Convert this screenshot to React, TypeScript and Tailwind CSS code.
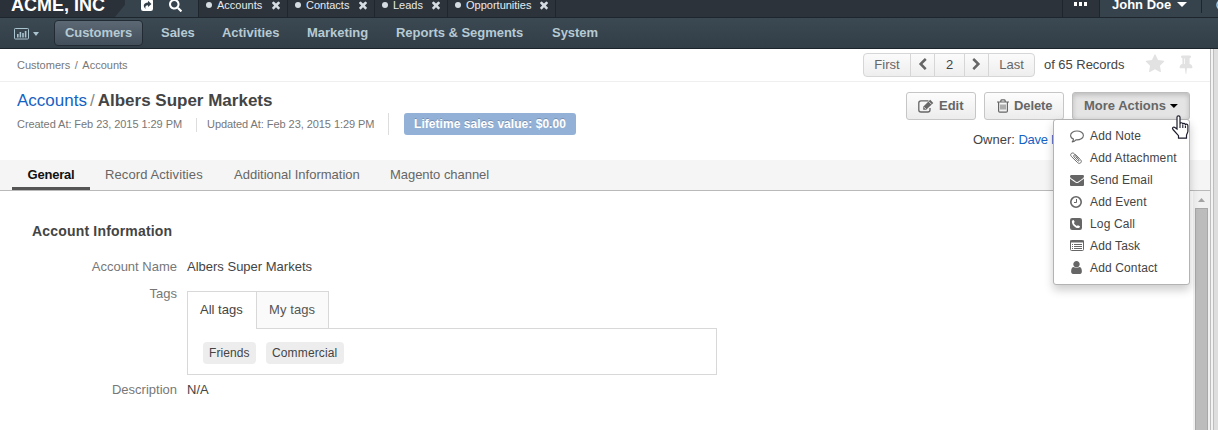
import type { ReactNode } from "react";
import { FaSearch } from "react-icons/fa";

function Glyph({ d, className }: { d: string; className: string }) {
  return (
    <svg viewBox="0 0 1792 1792" fill="currentColor" className={`shrink-0 ${className}`}>
      <path d={d} />
    </svg>
  );
}

const TIMES =
  "M1490 1322q0 40-28 68l-136 136q-28 28-68 28t-68-28l-294-294-294 294q-28 28-68 28t-68-28l-136-136q-28-28-28-68t28-68l294-294-294-294q-28-28-28-68t28-68l136-136q28-28 68-28t68 28l294 294 294-294q28-28 68-28t68 28l136 136q28 28 28 68t-28 68l-294 294 294 294q28 28 28 68z";
const CHEVRON_LEFT =
  "M1427 301l-531 531 531 531q19 19 19 45t-19 45l-166 166q-19 19-45 19t-45-19l-742-742q-19-19-19-45t19-45l742-742q19-19 45-19t45 19l166 166q19 19 19 45t-19 45z";
const CHEVRON_RIGHT =
  "M1363 877l-742 742q-19 19-45 19t-45-19l-166-166q-19-19-19-45t19-45l531-531-531-531q-19-19-19-45t19-45l166-166q19-19 45-19t45 19l742 742q19 19 19 45t-19 45z";
const STAR =
  "M1728 647q0 22-26 48l-363 354 86 500q1 7 1 20 0 21-10.500 35.500t-30.500 14.500q-19 0-40-12l-449-236-449 236q-22 12-40 12-21 0-31.500-14.500t-10.500-35.500q0-6 2-20l86-500-364-354q-25-27-25-48 0-37 56-46l502-73 225-455q19-41 49-41t49 41l225 455 502 73q56 9 56 46z";
const PIN =
  "M800 864v-448q0-14-9-23t-23-9-23 9-9 23v448q0 14 9 23t23 9 23-9 9-23zm672 352q0 26-19 45t-45 19h-429l-51 483q-2 12-10.500 20.500t-20.500 8.500h-1q-27 0-32-27l-76-485h-404q-26 0-45-19t-19-45q0-123 78.500-221.500t177.500-98.500v-512q-52 0-90-38t-38-90 38-90 90-38h640q52 0 90 38t38 90-38 90-90 38v512q99 0 177.500 98.500t78.500 221.500z";
const ENVELOPE =
  "M1792 710v794q0 66-47 113t-113 47h-1472q-66 0-113-47t-47-113v-794q44 49 101 87 362 246 497 345 57 42 92.500 65.500t94.500 48 110 24.500h2q51 0 110-24.500t94.500-48 92.500-65.500q170-123 498-345 57-39 100-87zm0-294q0 79-49 151t-122 123q-376 261-468 325-10 7-42.500 31t-54 38.500-52 32.500-57.500 27-50 9h-2q-23 0-50-9t-57.500-27-52-32.500-54-38.500-42.500-31q-91-64-262-182.500t-205-142.500q-62-42-117-115.500t-55-136.500q0-78 41.500-130t118.500-52h1472q65 0 112.500 47t47.500 113z";
const USER =
  "M1536 1399q0 109-62.500 187t-150.500 78h-854q-88 0-150.500-78t-62.500-187q0-85 8.500-160.500t31.500-152 58.500-131 94-89 134.500-34.500q131 128 313 128t313-128q76 0 134.500 34.500t94 89 58.500 131 31.500 152 8.500 160.500zm-256-887q0 159-112.500 271.500t-271.500 112.500-271.500-112.500-112.500-271.500 112.500-271.500 271.500-112.500 271.500 112.500 112.500 271.500z";

function ShareIcon() {
  return (
    <svg viewBox="0 0 12 12" className="size-[12px]">
      <rect width="12" height="12" rx="2.2" fill="#fff" />
      <path d="M7 1.800 10.500 5 7 8.100V6.300C4.800 6.300 4 7.200 4.500 10 1.600 7.300 2.500 3.800 7 3.600Z" fill="#33404a" />
    </svg>
  );
}

function ChartIcon() {
  return (
    <svg viewBox="0 0 15 12" className="h-[12px] w-[15px]">
      <rect x=".5" y=".5" width="14" height="10.500" rx=".8" fill="none" stroke="#a9c3cf" />
      <path d="M3 6h1.600v3.500H3zM5.600 4h1.600v5.500H5.600zM8.200 5h1.600v4.500H8.200zM10.800 3h1.600v6.500h-1.600z" fill="#a9c3cf" />
    </svg>
  );
}

function EditIcon() {
  return (
    <svg viewBox="0 0 16 14" className="mr-[5px] h-[14px] w-[16px] shrink-0">
      <path d="M10.500 1.800H3Q.8 1.800.8 4v7Q.8 13 3 13h6.800Q12 13 12 11V9" fill="none" stroke="currentColor" strokeWidth="1.300" />
      <path d="M12.200.8 15.300 3.900 8.200 10.800H5.200V7.800Z" fill="currentColor" />
      <path d="M10.800 2.600 13.600 5.400M6 8.200 7.800 10" stroke="#f6f6f6" strokeWidth=".8" />
    </svg>
  );
}

function TrashIcon() {
  return (
    <svg viewBox="0 0 12 14" className="mr-[5px] h-[14px] w-[12px] shrink-0" fill="none" stroke="currentColor">
      <path d="M0 3H12M3.800 3V1.800Q4 .9 4.800.9H7.200Q8 .9 8.200 1.800V3M1.600 3V12Q1.600 13.200 2.800 13.200H9.200Q10.400 13.200 10.400 12V3" strokeWidth="1.200" />
      <path d="M4 5.500v5M6 5.500v5M8 5.500v5" />
    </svg>
  );
}

function CommentIcon() {
  return (
    <svg viewBox="0 0 14 13" className="h-[13px] w-[14px]" fill="none" stroke="currentColor">
      <path d="M7 1C3.500 1 .6 2.900.6 5.400.6 7 1.700 8.300 3.500 9.100 3.400 10.200 2.900 11 2.200 11.900 3.900 11.500 5.100 10.800 5.900 9.800 10.200 10.200 13.400 8 13.400 5.400 13.400 2.900 10.500 1 7 1Z" strokeWidth="1.100" strokeLinejoin="round" />
    </svg>
  );
}

function PaperclipIcon() {
  return (
    <svg viewBox="0 0 12 12" className="size-[12px]" fill="none" stroke="currentColor" strokeLinecap="round">
      <path d="M8.600 6 4.300 1.700C2.200-.3-.6 2.200 1.300 4.400L7.700 10.700C9.800 12.600 12.600 10 10.700 7.900L5.900 3.200C4.500 2 2.800 3.600 4.100 5L7.900 8.800C8.800 9.500 9.600 8.600 8.900 7.800L5.700 4.700" strokeWidth=".95" />
    </svg>
  );
}

function ClockIcon() {
  return (
    <svg viewBox="0 0 12 12" className="size-[12px]" fill="none" stroke="currentColor">
      <circle cx="6" cy="6" r="5.200" strokeWidth="1.600" />
      <path d="M6.500 3V6.500H4" strokeWidth="1" />
    </svg>
  );
}

function PhoneSquareIcon() {
  return (
    <svg viewBox="0 0 12 12" className="size-[12px]">
      <rect width="12" height="12" rx="2.200" fill="currentColor" />
      <path d="M3.700 2.100 4.700 3.900 3.900 5C4.500 6.300 5.500 7.300 6.800 7.900L7.900 7.200 10 8.300C9.900 9.600 9 10.100 7.900 10.100 5 9.700 2.200 6.800 1.900 3.900 1.900 2.900 2.500 2.200 3.700 2.100Z" fill="#fff" />
    </svg>
  );
}

function ListIcon() {
  return (
    <svg viewBox="0 0 14 12" className="h-[12px] w-[14px]" fill="none" stroke="currentColor">
      <rect x=".5" y=".5" width="13" height="10" rx="1" />
      <path d="M0 1.500H14" strokeWidth="2" />
      <path d="M2 4.500h1M4 4.500h8M2 6.500h1M4 6.500h8M2 8.500h1M4 8.500h8" />
    </svg>
  );
}

function HandCursor() {
  return (
    <svg viewBox="0 0 18 24" className="absolute top-[115px] left-[1171px] z-30 h-[24px] w-[18px]">
      <path
        d="M6 14V2.300C6 .3 9 .3 9 2.300V9c0-1.700 2.800-1.700 2.800.3 0-1.500 2.600-1.300 2.600.7 0-1.500 2.500-1.200 2.500.8v5.400c0 1.500-1.400 3-1.400 4.300v2.700H7.500v-2.500L2 14.500C.6 12.800 2.600 11.300 4 12.500Z"
        fill="#fff"
        stroke="#1b1b2b"
        strokeWidth="1.200"
      />
      <path d="M9 9v4M11.800 9.500V13M14.400 10.500V13" stroke="#1b1b2b" strokeWidth="1.100" />
    </svg>
  );
}

function PinnedTab({ label, className }: { label: string; className: string }) {
  return (
    <div className={`flex h-[17px] shrink-0 border-r border-[#1f262d] pl-[7px] ${className}`}>
      <span className="mt-[2px] size-[6px] rounded-full bg-[#d5dde2]" />
      <span className="-mt-px ml-[5px] flex-1 text-[11px] leading-[13px] text-[#e6ebee]">{label}</span>
      <Glyph d={TIMES} className="-mt-px mr-[5px] size-[12px] text-[#d5dde2]" />
    </div>
  );
}

const pinned = [
  { label: "Accounts", className: "w-[89px]" },
  { label: "Contacts", className: "w-[87px]" },
  { label: "Leads", className: "w-[73px]" },
  { label: "Opportunities", className: "w-[108px]" },
];

function TopBar() {
  return (
    <header className="flex h-[18px] shrink-0 overflow-hidden border-b border-[#1e262d] bg-[#2d333b]">
      <div className="flex w-[199px] shrink-0 border-r border-[#1e262d] bg-[#36434d]">
        <div className="h-[17px] w-[125px] shrink-0 bg-[#2b3139] pl-[11px] [clip-path:polygon(0_0,100%_0,100%_28%,92%_100%,0_100%)]">
          <span className="-mt-[6px] block text-[18px] leading-[22px] font-bold whitespace-nowrap text-white">ACME, INC</span>
        </div>
        <div className="-mt-px ml-[16px]">
          <ShareIcon />
        </div>
        <FaSearch className="-mt-[1px] ml-[16px] size-[13px] text-white" />
      </div>
      {pinned.map((p) => (
        <PinnedTab key={p.label} {...p} />
      ))}
      <div className="flex-1" />
      <div className="flex w-[38px] shrink-0 gap-[2px] border-x border-[#1e262d] pt-[2px] pl-[11px]">
        <i className="h-[4px] w-[3px] bg-white" />
        <i className="h-[4px] w-[3px] bg-white" />
        <i className="h-[4px] w-[3px] bg-white" />
      </div>
      <div className="flex w-[118px] shrink-0 bg-[#36434d] pl-[12px]">
        <span className="-mt-[3px] w-[59px] shrink-0 text-[13px] leading-[15px] font-bold whitespace-nowrap text-white">John Doe</span>
        <i className="mt-[2px] ml-[6px] h-[5px] w-[10px] shrink-0 bg-white [clip-path:polygon(0_0,100%_0,50%_100%)]" />
        <div className="ml-[14px] h-[13px] w-px shrink-0 bg-[#1e262d]" />
        <svg viewBox="0 0 12 12" className="-mt-[1px] ml-[14px] size-[12px] shrink-0">
          <circle cx="6" cy="6" r="5" fill="none" stroke="#9cc9e8" strokeWidth="1.600" />
        </svg>
      </div>
    </header>
  );
}

const menus = [
  { label: "Sales", className: "w-[61px]" },
  { label: "Activities", className: "w-[85px]" },
  { label: "Marketing", className: "w-[89px]" },
  { label: "Reports & Segments", className: "w-[156px]" },
  { label: "System", className: "w-[60px]" },
];

function MainMenu() {
  return (
    <nav className="flex h-[31px] shrink-0 border-b border-[#1b242b] bg-linear-to-b from-[#3b4952] to-[#323e47] text-[13px] font-bold text-[#b6cad4]">
      <div className="flex w-[54px] pt-[10px] pl-[14px]">
        <ChartIcon />
        <i className="mt-[4px] ml-[4px] h-[4px] w-[6px] bg-[#a9c3cf] [clip-path:polygon(0_0,100%_0,50%_100%)]" />
      </div>
      <div className="mt-[2px] mr-[18px] h-[26px] w-[89px] rounded-[4px] border border-[#222b33] bg-linear-to-b from-[#5c6873] to-[#424f5a] pl-[10px] text-[13px] leading-[24px] tracking-[-0.08px]">
        Customers
      </div>
      {menus.map((m) => (
        <div key={m.label} className={`shrink-0 leading-[30px] tracking-[-0.03px] whitespace-nowrap ${m.className}`}>
          {m.label}
        </div>
      ))}
    </nav>
  );
}

function Pager() {
  return (
    <div className="flex h-[24px] w-[172px] overflow-hidden rounded-[4px] border border-[#d6d6d6] bg-linear-to-b from-[#fbfbfb] to-[#eeeeee] text-[13px] leading-[22px] text-[#666]">
      <div className="w-[47px] border-r border-[#d6d6d6] text-center">First</div>
      <div className="flex w-[24px] items-center justify-center border-r border-[#d6d6d6]">
        <Glyph d={CHEVRON_LEFT} className="-mt-[2px] size-[13px]" />
      </div>
      <div className="w-[30px] border-r border-[#d6d6d6] text-center text-[#444]">2</div>
      <div className="flex w-[24px] items-center justify-center border-r border-[#d6d6d6]">
        <Glyph d={CHEVRON_RIGHT} className="-mt-[2px] size-[13px]" />
      </div>
      <div className="flex-1 text-center">Last</div>
    </div>
  );
}

function RecordHeader() {
  return (
    <>
      <div className="flex h-[33px] shrink-0 border-b border-[#efefef] pl-[17px]">
        <div className="w-[846px] text-[11px] leading-[33px] text-[#777]">
          Customers<span className="mx-[1.500px]"> / </span>Accounts
        </div>
        <div className="pt-[4px]">
          <Pager />
        </div>
        <div className="ml-[9px] w-[101px] text-[13px] leading-[32px] tracking-[-0.04px] whitespace-nowrap text-[#444]">of 65 Records</div>
        <Glyph d={STAR} className="mt-[5px] size-[20px] text-[#e2e2e2]" />
        <Glyph d={PIN} className="mt-[5px] ml-[11px] size-[20px] text-[#e2e2e2]" />
      </div>
      <div className="flex h-[78px] shrink-0 pl-[17px]">
        <div className="w-[889px]">
          <div className="flex pt-[9px] text-[17px] leading-[20px]">
            <span className="text-[#1462c4]">Accounts</span>
            <span className="mx-[3px] text-[#888]">/</span>
            <span className="font-bold text-[#444]">Albers Super Markets</span>
          </div>
          <div className="mt-[2px] flex h-[22px] text-[11px] leading-[22px] tracking-[-0.06px] text-[#777]">
            <span className="w-[179px]">Created At: Feb 23, 2015 1:29 PM</span>
            <i className="mt-[5px] h-[14px] w-px bg-[#ddd]" />
            <span className="ml-[10px] w-[181px]">Updated At: Feb 23, 2015 1:29 PM</span>
            <i className="h-[22px] w-px bg-[#ddd]" />
            <span className="ml-[15px] w-[172px] rounded-[3px] bg-[#93b1d7] text-center text-[12px] font-bold tracking-[0.04px] text-white [text-shadow:0_-1px_0_rgba(0,0,0,0.2)]">
              Lifetime sales value: $0.00
            </span>
          </div>
        </div>
        <div>
          <div className="mt-[10px] flex h-[28px] gap-[8px] text-[13px] leading-[26px] font-bold text-[#666]">
            <div className="flex w-[70px] items-center rounded-[3px] border border-[#c6c6c6] bg-linear-to-b from-[#fdfdfd] to-[#ececec] pl-[11px]">
              <EditIcon />
              Edit
            </div>
            <div className="flex w-[80px] items-center rounded-[3px] border border-[#c6c6c6] bg-linear-to-b from-[#fdfdfd] to-[#ececec] pl-[12px] tracking-[-0.1px]">
              <TrashIcon />
              Delete
            </div>
            <div className="flex w-[118px] items-center rounded-[3px] border border-[#bdbdbd] bg-[#e4e4e4] pl-[11px] whitespace-nowrap shadow-[inset_0_2px_5px_rgba(0,0,0,0.18)]">
              More Actions
              <i className="ml-[4px] h-[4px] w-[8px] bg-black [clip-path:polygon(0_0,100%_0,50%_100%)]" />
            </div>
          </div>
          <div className="mt-[11px] pl-[67px] text-[13px] leading-[18px] whitespace-nowrap text-[#444]">
            Owner: <span className="tracking-[-0.3px] text-[#1462c4]">Dave Morris</span>
          </div>
        </div>
      </div>
    </>
  );
}

function SectionTabs() {
  return (
    <div className="flex h-[31px] shrink-0 border-b border-[#b9b9b9] bg-[#f5f5f5] pl-[12px] text-[13px] leading-[29px] text-[#666]">
      <div className="h-[30px] w-[78px] border-b-[3px] border-[#555] text-center font-bold tracking-[-0.2px] text-[#111]">General</div>
      <div className="ml-[15px] w-[129px] tracking-[0.1px]">Record Activities</div>
      <div className="w-[156px]">Additional Information</div>
      <div className="tracking-[-0.04px]">Magento channel</div>
    </div>
  );
}

function AccountInformation() {
  return (
    <section className="flex-1 bg-white pt-[31px] pl-[32px] text-[13px] text-[#444]">
      <h2 className="text-[14px] leading-[19px] font-bold tracking-[0.18px]">Account Information</h2>
      <div className="mt-[17px] flex leading-[18px]">
        <div className="w-[145px] text-right text-[#777]">Account Name</div>
        <div className="ml-[10px]">Albers Super Markets</div>
      </div>
      <div className="mt-[9px] flex">
        <div className="w-[145px] text-right leading-[18px] text-[#777]">Tags</div>
        <div className="mt-[6px] -mb-px ml-[10px] w-[530px]">
          <div className="flex h-[37px] leading-[35px]">
            <div className="z-10 -mb-px w-[70px] border border-b-0 border-[#d8d8d8] bg-white pl-[12px]">All tags</div>
            <div className="w-[72px] border border-b-0 border-l-0 border-[#d8d8d8] bg-[#fafafa] pl-[12px] tracking-[0.1px] text-[#555]">
              My tags
            </div>
          </div>
          <div className="flex h-[47px] gap-[10px] border border-[#d8d8d8] pt-[13px] pl-[15px] text-[12px] leading-[22px]">
            <span className="h-[22px] w-[53px] rounded-[4px] bg-[#ededed] pl-[6px] tracking-[0.1px]">Friends</span>
            <span className="h-[22px] w-[78px] rounded-[4px] bg-[#ededed] pl-[6px] tracking-[0.14px]">Commercial</span>
          </div>
        </div>
      </div>
      <div className="mt-[7px] flex leading-[18px]">
        <div className="w-[145px] text-right text-[#777]">Description</div>
        <div className="ml-[10px]">N/A</div>
      </div>
    </section>
  );
}

const actions: { label: string; icon: ReactNode }[] = [
  { label: "Add Note", icon: <CommentIcon /> },
  { label: "Add Attachment", icon: <PaperclipIcon /> },
  { label: "Send Email", icon: <Glyph d={ENVELOPE} className="-mt-px size-[14px]" /> },
  { label: "Add Event", icon: <ClockIcon /> },
  { label: "Log Call", icon: <PhoneSquareIcon /> },
  { label: "Add Task", icon: <ListIcon /> },
  { label: "Add Contact", icon: <Glyph d={USER} className="-mt-px -ml-[1.500px] size-[15px]" /> },
];

function ActionsMenu() {
  return (
    <div className="absolute top-[119px] left-[1053px] z-20 h-[166px] w-[137px] rounded-[3px] border border-[#b3b3b3] bg-white pt-[5px] pl-[16px] shadow-[0_5px_10px_rgba(0,0,0,0.2)]">
      {actions.map((a) => (
        <div key={a.label} className="flex h-[22px] items-center text-[12px] tracking-[0.14px] whitespace-nowrap text-[#444]">
          <span className="w-[20px] text-[#666]">{a.icon}</span>
          {a.label}
        </div>
      ))}
    </div>
  );
}

export default function App() {
  return (
    <div className="relative flex h-[430px] w-[1218px] flex-col overflow-hidden bg-white font-['Liberation_Sans',Arial,sans-serif]">
      <TopBar />
      <MainMenu />
      <div className="flex min-h-0 flex-1">
        <main className="flex min-w-0 flex-1 flex-col">
          <RecordHeader />
          <SectionTabs />
          <div className="flex min-h-0 flex-1">
            <AccountInformation />
            <div className="w-[17px] shrink-0 bg-[#f1f1f1] pt-[7px] pl-[2px]">
              <i className="ml-[3px] block h-[4px] w-[7px] bg-[#a3a3a3] [clip-path:polygon(50%_0,100%_100%,0_100%)]" />
              <div className="mt-[6px] h-[240px] w-[13px] border border-[#a8a8a8] bg-[#bcbcbc]" />
            </div>
          </div>
        </main>
        <div className="w-[4px] shrink-0 border-x border-[#bebebe] bg-[#f3f3f3]" />
        <div className="w-[4px] shrink-0 bg-[#dedede]" />
      </div>
      <ActionsMenu />
      <HandCursor />
    </div>
  );
}
